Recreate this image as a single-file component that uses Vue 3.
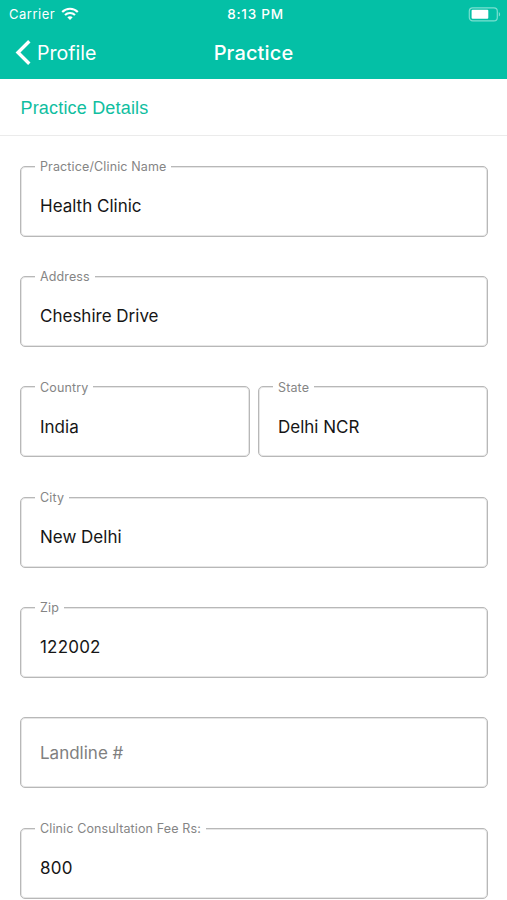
<script setup>
const rows = [
  [{ key: 'name', label: 'Practice/Clinic Name', value: 'Health Clinic' }],
  [{ key: 'address', label: 'Address', value: 'Cheshire Drive' }],
  [
    { key: 'country', label: 'Country', value: 'India' },
    { key: 'state', label: 'State', value: 'Delhi NCR' }
  ],
  [{ key: 'city', label: 'City', value: 'New Delhi' }],
  [{ key: 'zip', label: 'Zip', value: '122002' }],
  [{ key: 'landline', placeholder: 'Landline #' }],
  [{ key: 'fee', label: 'Clinic Consultation Fee Rs:', value: '800' }]
]
</script>

<template>
  <div class="screen">
    <header class="header">
      <div class="status">
        <div class="carrier">
          <span>Carrier</span>
          <svg class="wifi" width="18" height="14" viewBox="0 0 18 14">
            <path d="M1.2 5.1C5.5.6 12.5.6 16.8 5.1" />
            <path d="M4 8.1C6.8 5.2 11.2 5.2 14 8.1" />
            <path class="dot" d="M6.3 10.3C7.8 8.9 10.2 8.9 11.7 10.3L9 13Z" />
          </svg>
        </div>
        <span class="time">8:13 PM</span>
        <svg class="battery" width="33" height="15" viewBox="0 0 33 15">
          <rect class="shell" x="1.3" y="0.8" width="28" height="13" rx="3.4" />
          <rect class="charge" x="3.6" y="2.8" width="16.7" height="9" rx="1" />
          <path class="tip" d="M30.8 5C32.6 5.8 32.6 8.8 30.8 9.6Z" />
        </svg>
      </div>
      <nav class="nav">
        <div class="back">
          <svg width="17" height="28" viewBox="0 0 17 28">
            <path d="M15.3 2.2L4 13.5L15.3 24.8" />
          </svg>
          <span>Profile</span>
        </div>
        <h1 class="title">Practice</h1>
      </nav>
    </header>
    <h2 class="section">Practice Details</h2>
    <main class="form">
      <div v-for="(row, i) in rows" :key="i" class="row">
        <div v-for="f in row" :key="f.key" class="field" :class="f.key">
          <span v-if="f.label" class="label">{{ f.label }}</span>
          <span v-if="f.value" class="value">{{ f.value }}</span>
          <span v-else class="placeholder">{{ f.placeholder }}</span>
        </div>
      </div>
    </main>
  </div>
</template>

<style>
body {
  background: #fff;
  overflow: hidden;
}
</style>

<style scoped>
.screen {
  width: 507px;
  height: 900px;
  overflow: hidden;
  box-sizing: border-box;
  background: #fff;
  font-family: Inter, "Liberation Sans", sans-serif;
}
.header {
  height: 79px;
  background: #04c0a6;
  color: #fff;
}
.status {
  height: 27px;
  display: grid;
  grid-template-columns: 1fr auto 1fr;
  align-items: center;
  padding: 0 6px 0 9px;
  font-size: 13px;
  line-height: 27px;
}
.carrier {
  display: flex;
  align-items: center;
  gap: 6px;
  letter-spacing: 0.5px;
}
.wifi {
  fill: none;
  stroke: #fff;
  stroke-width: 2.1;
}
.wifi .dot {
  fill: #fff;
  stroke: none;
}
.time {
  padding: 1px 0 0 1px;
  font-size: 13.5px;
  font-weight: 550;
  letter-spacing: 0.75px;
}
.battery {
  justify-self: end;
}
.shell {
  fill: none;
  stroke: #7bdfd1;
  stroke-width: 1.2;
}
.charge {
  fill: #fff;
}
.tip {
  fill: #7bdfd1;
}
.nav {
  display: grid;
  grid-template-columns: 1fr auto 1fr;
  align-items: center;
  height: 52px;
  padding: 0 14px 0 14px;
}
.back {
  display: flex;
  align-items: center;
  gap: 6px;
  font-size: 19.6px;
  line-height: 28px;
  letter-spacing: -0.02px;
}
.back path {
  fill: none;
  stroke: #fff;
  stroke-width: 3.4;
}
.title {
  margin: 0;
  font-size: 20px;
  line-height: 28px;
  font-weight: 550;
  letter-spacing: 0.15px;
}
.section {
  box-sizing: border-box;
  height: 57px;
  margin: 0;
  padding: 1px 0 0 20.5px;
  border-bottom: 1px solid #ebebeb;
  font-family: "Liberation Sans", sans-serif;
  font-size: 18px;
  font-weight: 400;
  line-height: 57px;
  letter-spacing: 0.18px;
  color: #10bea0;
}
.form {
  display: flex;
  flex-direction: column;
  gap: 39.3px;
  padding: 29.8px 19px 0 20px;
}
.row {
  display: flex;
  gap: 8px;
}
.field {
  position: relative;
  flex: 1;
  box-sizing: border-box;
  height: 71px;
  padding-left: 19px;
  border: 1px solid #b8b8b8;
  border-radius: 5px;
  box-shadow: inset 0 0 0 1px #e6e6e6;
  display: flex;
  align-items: center;
}
.label {
  position: absolute;
  top: -8.8px;
  left: 14px;
  padding: 0 5px;
  background: #fff;
  font-size: 12.5px;
  line-height: 18px;
  letter-spacing: 0.13px;
  color: #858585;
  white-space: nowrap;
}
.value {
  padding-top: 9.6px;
  font-size: 17px;
  line-height: 24px;
  color: #161616;
}
.zip .value,
.fee .value {
  letter-spacing: 0.2px;
}
.placeholder {
  font-size: 17px;
  line-height: 24px;
  color: #808080;
}
</style>
